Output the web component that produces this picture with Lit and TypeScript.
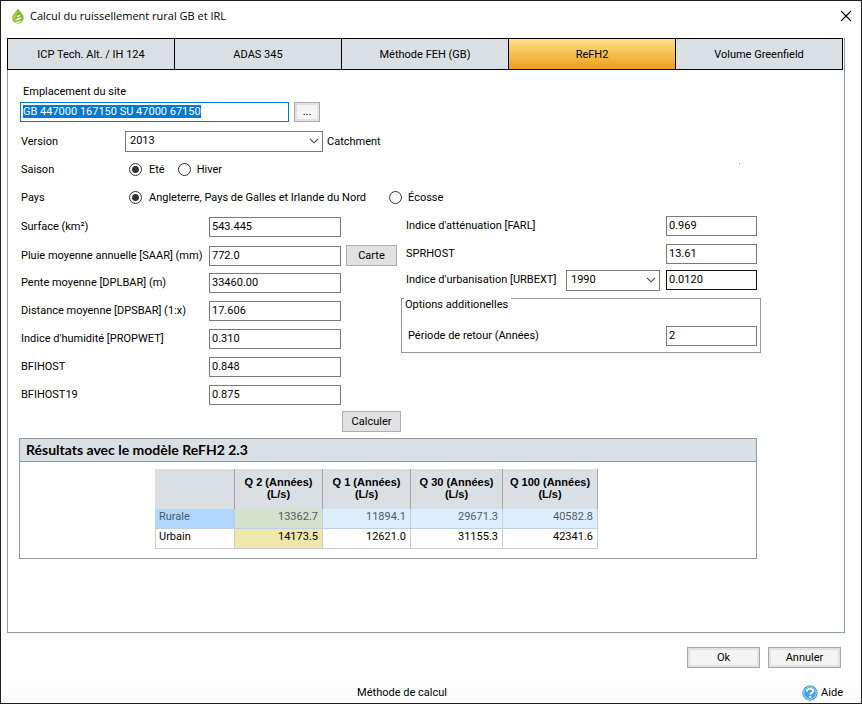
import { LitElement, html, css, svg } from "lit";
import { customElement, state, query } from "lit/decorators.js";

interface Field {
  id: string;
  label: string;
  value: string;
  button?: string;
}

const TABS = ["ICP Tech. Alt. / IH 124", "ADAS 345", "Méthode FEH (GB)", "ReFH2", "Volume Greenfield"];

const LEFT_FIELDS: Field[] = [
  { id: "area", label: "Surface (km²)", value: "543.445" },
  { id: "saar", label: "Pluie moyenne annuelle [SAAR] (mm)", value: "772.0", button: "Carte" },
  { id: "dplbar", label: "Pente moyenne [DPLBAR] (m)", value: "33460.00" },
  { id: "dpsbar", label: "Distance moyenne [DPSBAR] (1:x)", value: "17.606" },
  { id: "propwet", label: "Indice d'humidité [PROPWET]", value: "0.310" },
  { id: "bfihost", label: "BFIHOST", value: "0.848" },
  { id: "bfihost19", label: "BFIHOST19", value: "0.875" },
];

const PERIODS = ["2", "1", "30", "100"];

const RESULTS = [
  { name: "Rurale", values: ["13362.7", "11894.1", "29671.3", "40582.8"] },
  { name: "Urbain", values: ["14173.5", "12621.0", "31155.3", "42341.6"] },
];

const chevron = html`<svg class="chevron" viewBox="0 0 10 6" width="10" height="6" aria-hidden="true">
  ${svg`<path d="M1 .8 5 4.8 9 .8" fill="none" stroke="#444" stroke-width="1.1"/>`}
</svg>`;

@customElement("app-root")
export class AppRoot extends LitElement {
  @state() private tab = 3;
  @state() private selectedRow = 0;
  @query("#site") private site!: HTMLInputElement;

  static styles = css`
    :host {
      display: block;
      font: 11px/14px Roboto, "Liberation Sans", sans-serif;
      color: #000;
    }
    * { box-sizing: border-box; }
    .window {
      min-height: 100vh;
      display: flex;
      flex-direction: column;
      background: #fff;
      border: 1px solid #231f20;
    }
    .title {
      display: flex;
      align-items: center;
      height: 30px;
      padding: 0 9px;
    }
    .title h1 {
      flex: 1;
      margin: 0 0 0 5px;
      font: 400 11px/16px "Open Sans", "Noto Sans", sans-serif;
    }
    .drop { margin-left: 1px; }
    .close {
      display: grid;
      padding: 0;
      border: 0;
      background: none;
    }
    button, input, select { font: inherit; color: inherit; }
    .panel {
      flex: 1;
      margin: 7px 16px 14px 6px;
      border: 1px solid #8f9ba3;
      border-top: 0;
    }
    .tabs {
      display: grid;
      grid-template-columns: repeat(5, 1fr);
      margin: 0 1px 0 -1px;
      border: 1px solid #000;
      border-left: 0;
    }
    .tab {
      height: 30px;
      padding: 2px 0 0;
      border: 0;
      border-left: 1px solid #000;
      background: #dadfe3;
    }
    .tab.active { background: linear-gradient(#ffe08a, #f6bf50 50%, #ee9d24); }
    .body { padding: 15px 83px 0 12px; }
    .site-label { display: block; margin-left: 3px; }
    .line {
      display: flex;
      align-items: center;
      height: 28px;
    }
    .site-line { height: 20px; margin: 3px 0 5px; gap: 5px; }
    .caption { width: 105px; padding: 2px 0 0 1px; }
    .note, .radio span { padding-top: 2px; }
    .text {
      height: 20px;
      padding: 0 2px 1px;
      border: 1px solid #7a7a7a;
      border-radius: 0;
      background: #fff;
      outline: 0;
    }
    .site { width: 269px; }
    .site:focus { border-color: #0078d7; }
    .site::selection { background: #0078d7; color: #fff; }
    .btn {
      height: 21px;
      padding: 0;
      border: 1px solid #adadad;
      background: #e1e1e1;
    }
    .btn.framed {
      border-color: #a8a8a8;
      background: #f4f4f4;
      box-shadow: inset 0 0 0 2px #e1e1e1;
    }
    .browse { width: 26px; height: 20px; }
    .select { display: grid; align-items: center; }
    .select > * { grid-area: 1 / 1; }
    .select select {
      width: 100%;
      height: 21px;
      padding: 0 4px;
      border: 1px solid #7a7a7a;
      border-radius: 0;
      background: #fff;
      appearance: none;
    }
    .chevron { justify-self: end; margin-right: 4px; pointer-events: none; }
    .version { width: 198px; margin-right: 4px; }
    .radio { display: flex; align-items: center; gap: 7px; margin: 0 13px 0 4px; }
    .radio.wide { margin-right: 23px; }
    .radio + .radio { margin-left: 0; gap: 6px; }
    .radio input {
      width: 13px;
      height: 13px;
      margin: 0;
      border: 1px solid #333;
      border-radius: 50%;
      background: #fff;
      appearance: none;
    }
    .radio input:checked { background: radial-gradient(circle, #333 3px, #fff 4px); }
    .mark { width: 1px; height: 1px; margin: 0 21px 11px auto; background: #888; }
    .form {
      display: grid;
      grid-template-columns: 381px 1fr;
      margin-top: 4px;
    }
    .left { display: grid; row-gap: 8px; padding-top: 2px; }
    .right { padding-top: 1px; }
    .field {
      display: grid;
      grid-template-columns: 188px 132px 51px;
      column-gap: 5px;
      align-items: center;
      height: 20px;
    }
    .field label { margin-right: -5px; padding-left: 1px; white-space: nowrap; }
    .field .text { width: 132px; margin-left: -4px; }
    .field .btn { width: 51px; margin-left: -4px; }
    .rfield {
      display: flex;
      align-items: center;
      gap: 6px;
      height: 20px;
      margin: 0 4px 8px 5px;
    }
    .rfield.tight { margin-bottom: 6px; }
    .rfield label { flex: 1; white-space: nowrap; }
    .rfield .text { width: 91px; }
    .rfield .select { width: 94px; }
    .text.strong { border-color: #111; }
    fieldset {
      min-width: 0;
      height: 55px;
      margin: 0;
      padding: 27px 3px 0 0;
      border: 1px solid #8f9ba3;
    }
    legend { height: 1px; margin-left: 2px; padding: 0 3px 0 1px; }
    fieldset .rfield { margin: 0 0 0 6px; }
    .calc { display: block; width: 59px; margin: 6px 0 6px 322px; }
    .results { margin: 0 4px 0 -1px; border: 1px solid #8f9ba3; padding-bottom: 9px; }
    .results h2 {
      margin: 0;
      padding: 0 6px;
      border-bottom: 1px solid #8f9ba3;
      background: #dadfe3;
      font: 700 14px/22px Lato, "Noto Sans", sans-serif;
    }
    table {
      width: 60%;
      min-width: 443px;
      margin: 7px 0 0 135px;
      border-collapse: separate;
      border-spacing: 0;
      table-layout: fixed;
    }
    .c0 { width: 80px; }
    .c1 { width: 88px; }
    .c3 { width: 92px; }
    .c4 { width: 95px; }
    thead th {
      height: 40px;
      padding: 0 0 2px;
      border-right: 1px solid #a6a6a6;
      background: #dadfe3;
      font: 700 11px/12px "Liberation Sans", sans-serif;
    }
    tbody th, tbody td {
      height: 20px;
      padding: 0 4px 3px;
      border: solid #ccc;
      border-width: 0 1px 1px 0;
      font-weight: 400;
      text-align: right;
    }
    tbody th { text-align: left; border-left-width: 1px; padding-left: 3px; }
    tbody td:nth-child(2) { background: #eee8aa; }
    .sel th, .sel td { color: #525a66; border-color: #bfd0e6; background: #deeeff; }
    .sel th { background: #b0d6ff; border-left-color: #b0d6ff; }
    tbody .sel td:nth-child(2) { background: #d4e1cc; }
    .actions {
      display: flex;
      justify-content: flex-end;
      gap: 8px;
      padding: 0 20px 13px;
    }
    .actions .btn { width: 73px; }
    .status {
      display: grid;
      grid-template-columns: 1fr auto 1fr;
      align-items: center;
      height: 22px;
      padding: 2px 18px 0 0;
      background: #fcfcfc;
    }
    .status span { grid-column: 2; margin-right: 40px; }
    .help {
      display: flex;
      align-items: center;
      justify-self: end;
      gap: 3px;
      color: inherit;
      text-decoration: none;
    }
  `;

  firstUpdated() {
    this.site.focus();
    this.site.select();
  }

  private textField(f: Field, cls = "text") {
    return html`<label for=${f.id}>${f.label}</label><input class=${cls} id=${f.id} .value=${f.value} />`;
  }

  render() {
    return html`
      <div class="window">
        <header class="title">
          <svg class="drop" viewBox="0 0 14 16" width="14" height="16" aria-hidden="true">
            <path d="M7 .5C5.400 3.700 1.300 6.400 1.300 10.200a5.700 5.300 0 0 0 11.400 0C12.700 6.400 8.600 3.700 7 .5Z" fill="#8ab52f" />
            <path d="M7 .5C5.400 3.700 1.300 6.400 1.300 10.200c0 1 .3 2 .8 2.700C5 10 7 6 7 .5Z" fill="#a7c64a" />
            <path d="M2.600 10.400c1.500 1.700 3.200.4 4.400-.2s2.600-1.400 4.200-.2c-1.300 0-2 .8-2.900 1.400-1.800 1.200-4.200 1-5.700-1Zm1 2.500c2.300 1.200 4.900.8 7.200-1-.7 3.200-5.200 3.800-7.200 1Z" fill="#fff" />
            <path d="M6 8.800c.5-1.500 1.700-2.100 3.100-1.700-.3 1.500-1.600 2.100-3.100 1.700Z" fill="#fff" />
          </svg>
          <h1>Calcul du ruissellement rural GB et IRL</h1>
          <button class="close" aria-label="Fermer">
            <svg viewBox="0 0 12 12" width="12" height="12"><path d="M1 1l10 10M11 1 1 11" stroke="#000" stroke-width="1.100" /></svg>
          </button>
        </header>

        <main class="panel">
          <nav class="tabs" role="tablist">
            ${TABS.map(
              (t, i) => html`<button role="tab" class="tab ${i === this.tab ? "active" : ""}"
                aria-selected=${i === this.tab} @click=${() => (this.tab = i)}>${t}</button>`
            )}
          </nav>
          <div class="body">
            <label class="site-label" for="site">Emplacement du site</label>
            <div class="line site-line">
              <input class="text site" id="site" value="GB 447000 167150 SU 47000 67150" />
              <button class="btn framed browse">...</button>
            </div>
            <div class="line">
              <label class="caption" for="version">Version</label>
              <div class="select version">
                <select id="version"><option>2013</option></select>${chevron}
              </div>
              <span class="note">Catchment</span>
            </div>
            <div class="line" role="radiogroup" aria-labelledby="season">
              <span class="caption" id="season">Saison</span>
              <label class="radio"><input type="radio" name="season" checked /><span>Eté</span></label>
              <label class="radio"><input type="radio" name="season" /><span>Hiver</span></label>
              <span class="mark"></span>
            </div>
            <div class="line" role="radiogroup" aria-labelledby="country">
              <span class="caption" id="country">Pays</span>
              <label class="radio wide"><input type="radio" name="country" checked /><span>Angleterre, Pays de Galles et Irlande du Nord</span></label>
              <label class="radio"><input type="radio" name="country" /><span>Écosse</span></label>
            </div>

            <div class="form">
              <div class="left">
                ${LEFT_FIELDS.map(
                  (f) => html`<div class="field">
                    ${this.textField(f)}${f.button ? html`<button class="btn">${f.button}</button>` : ""}
                  </div>`
                )}
              </div>
              <div class="right">
                <div class="rfield">${this.textField({ id: "farl", label: "Indice d'atténuation [FARL]", value: "0.969" })}</div>
                <div class="rfield tight">${this.textField({ id: "sprhost", label: "SPRHOST", value: "13.61" })}</div>
                <div class="rfield">
                  <label for="urbext">Indice d'urbanisation [URBEXT]</label>
                  <div class="select">
                    <select aria-label="Année URBEXT"><option>1990</option></select>${chevron}
                  </div>
                  <input class="text strong" id="urbext" value="0.0120" />
                </div>
                <fieldset>
                  <legend>Options additionelles</legend>
                  <div class="rfield">${this.textField({ id: "period", label: "Période de retour (Années)", value: "2" })}</div>
                </fieldset>
              </div>
            </div>
            <button class="btn calc">Calculer</button>

            <section class="results">
              <h2>Résultats avec le modèle ReFH2 2.3</h2>
              <table>
                <colgroup><col class="c0" /><col class="c1" /><col class="c1" /><col class="c3" /><col class="c4" /></colgroup>
                <thead>
                  <tr><th></th>${PERIODS.map((p) => html`<th scope="col">Q ${p} (Années)<br />(L/s)</th>`)}</tr>
                </thead>
                <tbody>
                  ${RESULTS.map(
                    (r, i) => html`<tr class=${i === this.selectedRow ? "sel" : ""} @click=${() => (this.selectedRow = i)}>
                      <th scope="row">${r.name}</th>${r.values.map((v) => html`<td>${v}</td>`)}
                    </tr>`
                  )}
                </tbody>
              </table>
            </section>
          </div>
        </main>

        <div class="actions">
          <button class="btn framed">Ok</button>
          <button class="btn framed">Annuler</button>
        </div>
        <footer class="status">
          <span>Méthode de calcul</span>
          <a class="help" href="#aide">
            <svg viewBox="0 0 16 16" width="16" height="16" aria-hidden="true">
              <circle cx="8" cy="8" r="7.200" fill="#3aa5e2" stroke="#3a80b8" stroke-width=".8" />
              <circle cx="8" cy="8" r="6.200" fill="none" stroke="#b9e4f9" stroke-width=".9" />
              <path d="M4.800 6.600C4.900 4.600 6.300 3.900 8 3.900c1.900 0 3.200.8 3.200 2.200 0 1.900-2.900 1.600-2.900 3.400" fill="none" stroke="#fff" stroke-width="1.800" />
              <circle cx="8.200" cy="11.800" r="1.100" fill="#fff" />
            </svg>Aide</a>
        </footer>
      </div>
    `;
  }
}
